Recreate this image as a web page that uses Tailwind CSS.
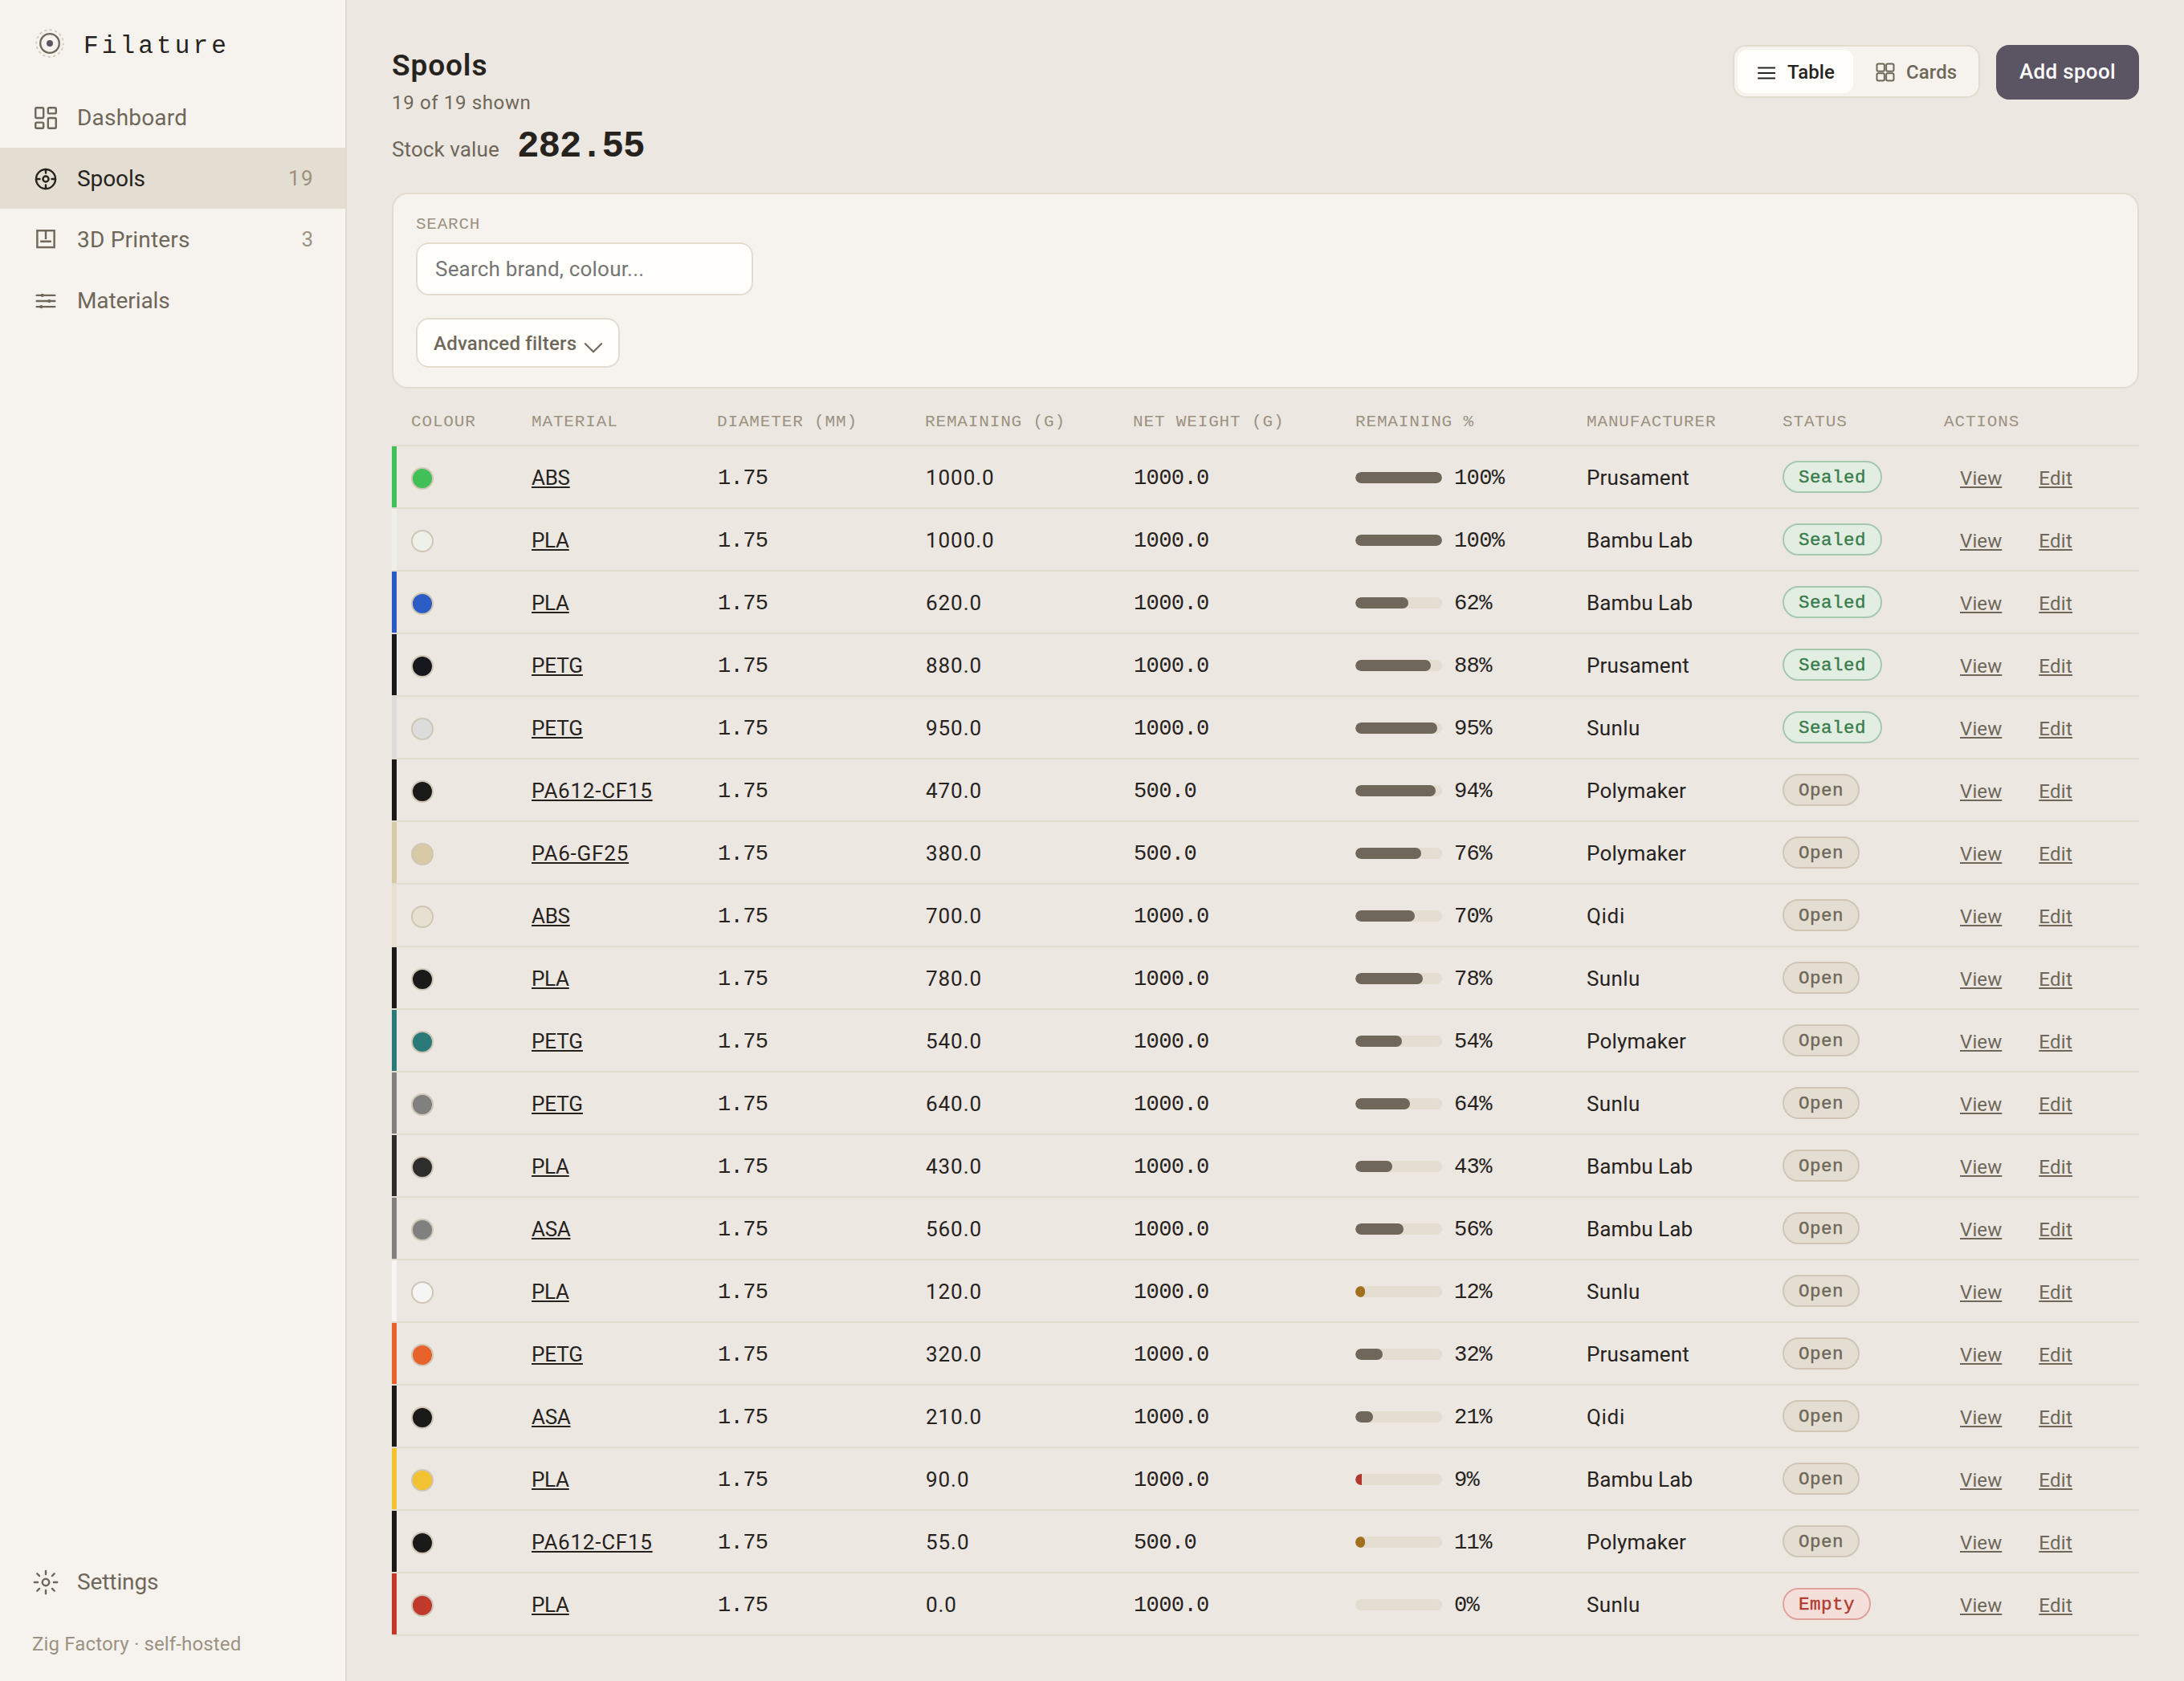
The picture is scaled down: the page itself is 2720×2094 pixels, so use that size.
<!DOCTYPE html>
<html lang="en">
<head>
<meta charset="utf-8">
<title>Filature – Spools</title>
<script src="https://cdn.jsdelivr.net/npm/@tailwindcss/browser@4"></script>
</head>
<body class="flex h-[2094px] w-[2720px] overflow-hidden bg-[#ece7e1] font-['Roboto',sans-serif] text-[#26231f]">

<!-- Sidebar -->
<aside class="flex w-[432px] shrink-0 flex-col border-r-2 border-[#e2dcd0] bg-[#f6f3ee] pt-8">
  <div class="flex h-11 items-center gap-5 pl-10">
    <svg class="size-11" viewBox="0 0 44 44" fill="none">
      <circle cx="22" cy="22" r="16.8" stroke="#d3cbb9" stroke-width="1.8" stroke-dasharray="3.3 3.297" stroke-dashoffset="1"/>
      <circle cx="22" cy="22" r="11.8" stroke="#6e675a" stroke-width="2.3"/>
      <circle cx="22" cy="22" r="4" fill="#5b5463"/>
    </svg>
    <span class="pt-[7px] font-['Liberation_Mono',monospace] text-[31px] leading-9 tracking-[4.15px]">Filature</span>
  </div>

  <nav class="mt-8 flex flex-col text-[28px] text-[#6e675a]">
    <a class="flex h-[76px] items-center gap-5 px-10">
      <svg class="mt-[2px] size-[34px]" viewBox="0 0 24 24" fill="none" stroke="currentColor" stroke-width="1.7">
        <rect x="3" y="3" width="7" height="9" rx="1"/><rect x="14" y="3" width="7" height="5" rx="1"/>
        <rect x="14" y="12" width="7" height="9" rx="1"/><rect x="3" y="16" width="7" height="5" rx="1"/>
      </svg>
      <span class="pt-px pl-[2px] tracking-[0.2px]">Dashboard</span>
    </a>
    <a class="flex h-[76px] items-center gap-5 bg-[#e4ddd1] px-10 text-[#26231f]">
      <svg class="mt-[2px] size-[34px]" viewBox="0 0 24 24" fill="none" stroke="currentColor" stroke-width="1.7" stroke-linecap="round">
        <circle cx="12" cy="12" r="8.5"/><circle cx="12" cy="12" r="2.5"/>
        <path d="M12 3.5v3.2M12 17.3v3.2M3.5 12h3.2M17.3 12h3.2"/>
      </svg>
      <span class="pt-px pl-[2px] tracking-[-0.1px]">Spools</span>
      <span class="mr-[-1px] ml-auto text-[26px] tracking-[1.4px] text-[#9c9282]">19</span>
    </a>
    <a class="flex h-[76px] items-center gap-5 px-10">
      <svg class="mt-[2px] size-[34px]" viewBox="0 0 24 24" fill="none" stroke="currentColor" stroke-width="1.7">
        <rect x="4.5" y="3.7" width="15" height="14.7"/>
        <path d="M12 3.7v7.6M7.2 13.2h9.6"/>
      </svg>
      <span class="pt-px pl-[2px] tracking-[0.2px]">3D Printers</span>
      <span class="ml-auto text-[26px] text-[#9c9282]">3</span>
    </a>
    <a class="flex h-[76px] items-center gap-5 px-10">
      <svg class="mt-[2px] size-[34px]" viewBox="0 0 24 24" fill="none" stroke="currentColor" stroke-width="1.7" stroke-linecap="round">
        <path d="M4 7h16M4 12h16M4 17h16"/>
        <g fill="currentColor" stroke="none"><circle cx="9" cy="7" r="1.5"/><circle cx="15" cy="12" r="1.5"/><circle cx="8" cy="17" r="1.5"/></g>
      </svg>
      <span class="pt-px pl-[2px] tracking-[-0.1px]">Materials</span>
    </a>
  </nav>

  <div class="mt-auto text-[#6e675a]">
    <a class="flex h-[76px] items-center gap-5 px-10 text-[28px]">
      <svg class="mt-[2px] size-[34px]" viewBox="0 0 24 24" fill="none" stroke="currentColor" stroke-width="1.7" stroke-linecap="round">
        <circle cx="12" cy="12" r="3"/>
        <path d="M12 2v3M12 19v3M2 12h3M19 12h3M4.4 4.4l2 2M17.6 17.6l2 2M4.4 19.6l2-2M17.6 6.4l2-2"/>
      </svg>
      <span class="pt-px pl-[2px] tracking-[-0.1px]">Settings</span>
    </a>
    <p class="mt-[22px] mb-[28px] pl-10 text-[24px] leading-9 tracking-[0.15px] text-[#9c9282]">Zig Factory · self-hosted</p>
  </div>
</aside>

<!-- Main -->
<main class="flex grow flex-col px-14 pt-14">
  <header class="flex items-start justify-between">
    <div class="pt-[6px]">
      <h1 class="text-[37px] leading-10 font-semibold tracking-[0.9px]">Spools</h1>
      <p class="mt-2 text-[24px] leading-9 tracking-[0.65px] text-[#6e675a]">19 of 19 shown</p>
      <p class="mt-[9px] mb-px flex h-14 items-baseline">
        <span class="w-[156px] text-[26px] leading-8 tracking-[0.1px] text-[#6e675a]">Stock value</span>
        <span class="font-['Liberation_Mono',monospace] text-[46px] leading-[56px] font-bold tracking-[-1.2px]">282.55</span>
      </p>
    </div>
    <div class="flex items-start gap-5">
      <div class="flex h-[66px] gap-1 rounded-[16px] border-2 border-[#e2dcd0] bg-[#f6f3ee] p-1 text-[24px] font-medium">
        <button class="flex w-[144px] items-center gap-3 rounded-[12px] bg-[#fffefb] pl-[22px]">
          <svg class="mt-[4px] size-7" viewBox="0 0 28 28" fill="none" stroke="currentColor" stroke-width="2"><path d="M3.2 7.5h21.8M3.2 14h21.8M3.2 20.5h21.8"/></svg>
          <span class="pt-[2px] tracking-[0.1px]">Table</span>
        </button>
        <button class="flex w-[148px] items-center gap-3 pl-[22px] text-[#6e675a]">
          <svg class="mt-[2px] size-7" viewBox="0 0 24 24" fill="none" stroke="currentColor" stroke-width="1.7">
            <rect x="3" y="3" width="8" height="8" rx="1.5"/><rect x="13" y="3" width="8" height="8" rx="1.5"/>
            <rect x="3" y="13" width="8" height="8" rx="1.5"/><rect x="13" y="13" width="8" height="8" rx="1.5"/>
          </svg>
          <span class="pt-[2px] tracking-[0.1px]">Cards</span>
        </button>
      </div>
      <button class="h-[68px] w-[178px] rounded-[16px] bg-[#5b5463] pb-[2px] text-[26px] font-medium tracking-[0.3px] text-white">Add spool</button>
    </div>
  </header>

  <section class="mt-7 flex h-[244px] flex-col items-start rounded-[20px] border-2 border-[#e2dcd0] bg-[#f6f3ee] px-7 pt-[26px]">
    <label class="font-['Liberation_Mono',monospace] text-[21px] leading-6 tracking-[0.75px] text-[#9c9282]">SEARCH</label>
    <div class="mt-[10px] flex h-[66px] w-[420px] items-center rounded-[16px] border-2 border-[#e2dcd0] bg-[#fffefb] px-[22px] text-[26px] tracking-[0.2px] text-[#757575]">Search brand, colour...</div>
    <button class="mt-7 flex h-[62px] w-[254px] items-center rounded-[16px] border-2 border-[#e2dcd0] bg-[#fffefb] pl-5 text-[24px] font-medium text-[#6e675a]">
      <span class="pt-px tracking-[0.22px]">Advanced filters</span>
      <svg class="mt-[12px] ml-[9px] h-[14px] w-6" viewBox="0 0 24 14" fill="none" stroke="currentColor" stroke-width="2"><path d="M1.2 1.5L12 12.3L22.8 1.5"/></svg>
    </button>
  </section>

  <div id="table">
    <div class="grid h-[72px] grid-cols-[174px_231px_259px_259px_277px_288px_244px_201px_243px] items-center border-b-2 border-[#e2dcd0] pt-[14px] font-['Liberation_Mono',monospace] text-[21px] tracking-[0.85px] whitespace-nowrap text-[#9c9282]">
      <span class="pl-6">COLOUR</span><span>MATERIAL</span><span>DIAMETER (MM)</span><span>REMAINING (G)</span><span>NET WEIGHT (G)</span><span>REMAINING %</span><span>MANUFACTURER</span><span>STATUS</span><span>ACTIONS</span>
    </div>
  </div>
</main>

<script>
  // colour, material, remaining g, net g, remaining %, bar px, manufacturer, status
  const spools = [
    ["#40c057","ABS","1000.0","1000.0",100,108,"Prusament","Sealed"],
    ["#eef0ea","PLA","1000.0","1000.0",100,108,"Bambu Lab","Sealed"],
    ["#2b5cc4","PLA","620.0","1000.0",62,66,"Bambu Lab","Sealed"],
    ["#16181d","PETG","880.0","1000.0",88,94,"Prusament","Sealed"],
    ["#dcdcdc","PETG","950.0","1000.0",95,102,"Sunlu","Sealed"],
    ["#1a1a1a","PA612-CF15","470.0","500.0",94,100,"Polymaker","Open"],
    ["#d8caa5","PA6-GF25","380.0","500.0",76,82,"Polymaker","Open"],
    ["#e8e0d0","ABS","700.0","1000.0",70,74,"Qidi","Open"],
    ["#1a1a1a","PLA","780.0","1000.0",78,84,"Sunlu","Open"],
    ["#2a7a7a","PETG","540.0","1000.0",54,58,"Polymaker","Open"],
    ["#808080","PETG","640.0","1000.0",64,68,"Sunlu","Open"],
    ["#2d2d2d","PLA","430.0","1000.0",43,46,"Bambu Lab","Open"],
    ["#808080","ASA","560.0","1000.0",56,60,"Bambu Lab","Open"],
    ["#f5f5f5","PLA","120.0","1000.0",12,12,"Sunlu","Open"],
    ["#e8632b","PETG","320.0","1000.0",32,34,"Prusament","Open"],
    ["#1a1a1a","ASA","210.0","1000.0",21,22,"Qidi","Open"],
    ["#f2c230","PLA","90.0","1000.0",9,8,"Bambu Lab","Open"],
    ["#1a1a1a","PA612-CF15","55.0","500.0",11,12,"Polymaker","Open"],
    ["#c0392b","PLA","0.0","1000.0",0,0,"Sunlu","Empty"],
  ];
  const pill = {
    Sealed: "border-[#a5c8ae] bg-[#e3eee2] text-[#3a7d4c]",
    Open: "border-[#cfc6b5] bg-[#e4ddd1] text-[#6e675a]",
    Empty: "border-[#e0a29b] bg-[#f5dfda] text-[#b03a2e]",
  };
  const nameTracking = {
    "ABS": "tracking-[-0.3px]", "ASA": "tracking-[-0.3px]", "PLA": "tracking-[-0.3px]", "PETG": "tracking-[-0.1px]",
    "PA612-CF15": "tracking-[0.75px]", "PA6-GF25": "tracking-[0.8px]",
  };
  const makerTracking = {
    "Prusament": "tracking-[0.15px]", "Bambu Lab": "tracking-[0.1px]", "Polymaker": "tracking-[0.2px]",
    "Sunlu": "tracking-[0.4px]", "Qidi": "tracking-[0.7px]",
  };
  const fill = p => p < 10 ? "rounded-l-[7px] bg-[#b03a2e]" : p < 20 ? "rounded-full bg-[#a0701c]" : "rounded-full bg-[#6e675a]";
  document.getElementById("table").insertAdjacentHTML("beforeend", spools.map(([c, name, rem, net, pct, bar, maker, status]) => `
    <div class="grid h-[78px] grid-cols-[174px_231px_259px_259px_277px_288px_244px_201px_243px] items-center border-b-2 border-[#e2dcd0] text-[26px] whitespace-nowrap">
      <div class="flex h-full items-center gap-[18px]">
        <i class="h-full w-[6px]" style="background:${c}"></i>
        <i class="mt-[4px] size-7 rounded-full border-2 border-[#cfc6b5]" style="background:${c}"></i>
      </div>
      <div class="pt-[2px]"><a class="underline decoration-2 underline-offset-2 ${nameTracking[name]}">${name}</a></div>
      <div class="pt-[5px] pl-px font-['Liberation_Mono',monospace] text-[27px] tracking-[-0.6px]">1.75</div>
      <div class="pt-[2px] pl-px tracking-[0.95px]">${rem}</div>
      <div class="pt-[5px] pl-px font-['Liberation_Mono',monospace] text-[27px] tracking-[-0.6px]">${net}</div>
      <div class="flex items-center gap-[15px]">
        <div class="mt-[2px] h-[14px] w-[108px] overflow-hidden rounded-full bg-[#e4ddd1]"><div class="h-full ${fill(pct)}" style="width:${bar}px"></div></div>
        <span class="pt-[5px] font-['Liberation_Mono',monospace] text-[27px] tracking-[-0.6px]">${pct}%</span>
      </div>
      <div class="pt-[2px] ${makerTracking[maker]}">${maker}</div>
      <div class="flex"><span class="flex h-10 items-center rounded-full border-2 px-[18px] pt-[3px] font-['Liberation_Mono',monospace] text-[22.5px] tracking-[0.5px] [-webkit-text-stroke:0.4px_currentColor] ${pill[status]}">${status}</span></div>
      <div class="flex gap-[46px] pt-[4px] pl-5 text-[24px] text-[#6e675a]">
        <a class="tracking-[0.1px] underline decoration-2 underline-offset-2">View</a>
        <a class="tracking-[0.3px] underline decoration-2 underline-offset-2">Edit</a>
      </div>
    </div>`).join(""));
</script>
</body>
</html>
